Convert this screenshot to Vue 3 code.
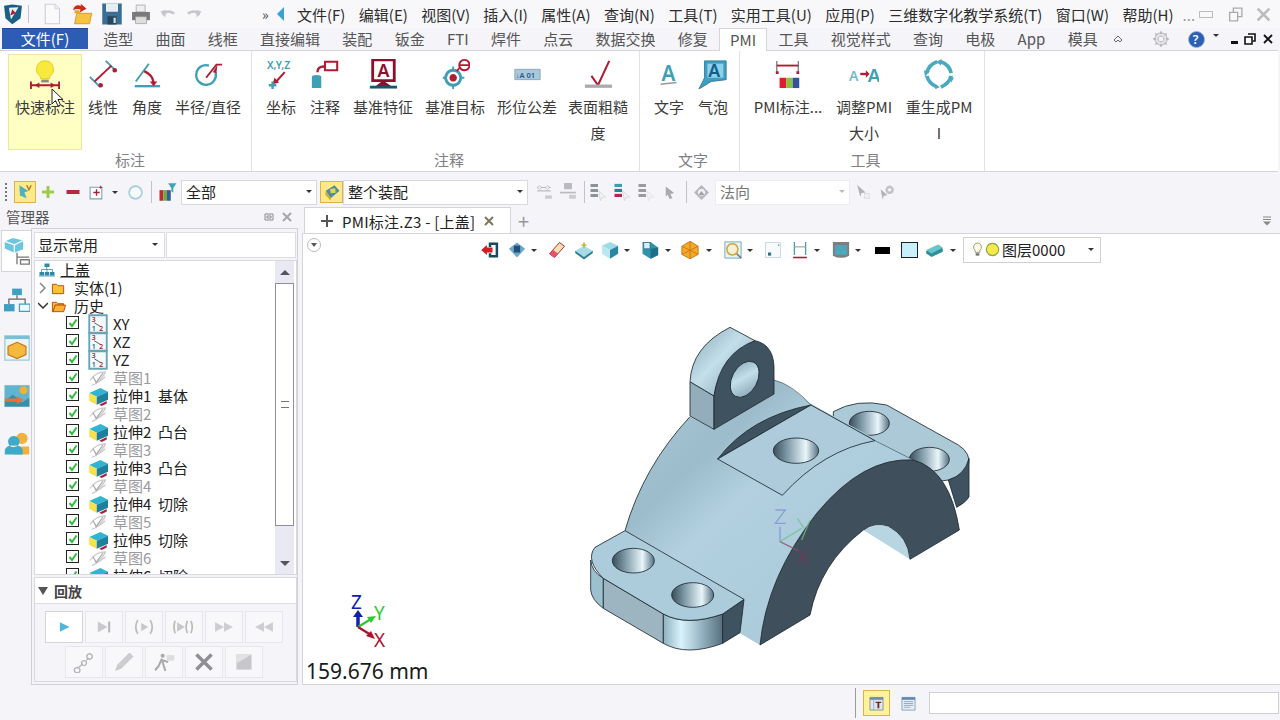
<script setup>
import { h } from 'vue'

const p = (d, f = 'none', s = 'none', w = 2) => ({ d, f, s, w })
const t = (txt, x, y, size, f) => ({ txt, x, y, size, f })
const teal = '#3f9fb5'
const red = '#b01c34'
const grey = '#b9b9bf'

const icons = {
  quick: [p('M16 2a9 9 0 0 0-5 16.500V21h10v-2.500A9 9 0 0 0 16 2z', '#f9e93c', '#e3c92a', 1), p('M12 22h8v3h-8z', '#8d8d80'), p('M1 28H31M1 24v8M31 24v8', 'none', red, 2), p('M5 28l5-3v6zM27 28l-5-3v6z', red)],
  linear: [p('M2 19L13 30M19 2L30 13', 'none', teal, 2), p('M7 24L25 7', 'none', red, 2), p('M11 28a2.500 2.500 0 1 0 5 0a2.500 2.500 0 1 0-5 0zM26 12a2.500 2.500 0 1 0 5 0a2.500 2.500 0 1 0-5 0z', red)],
  angle: [p('M3 29H30', 'none', teal, 2.500), p('M4 24L18 5', 'none', teal, 2), p('M13 13Q22 17 23 25', 'none', red, 2.500), p('M19 24h8l-4 5z', red)],
  radius: [p('M24 14A10.500 10.500 0 1 1 17 7', 'none', teal, 2.500), p('M14 20L25 6H31', 'none', red, 2), p('M21 14l5-8-1 9z', red)],
  coord: [t('X,Y,Z', 1, 11, 11, teal), p('M20 14L10 25', 'none', red, 2.200), p('M7 27l2-7 5 5z', red), p('M3 28H11M7 24V32', 'none', teal, 2.500)],
  note: [p('M2 19a5 2 0 0 1 10 0V31H2z', teal), p('M8 14Q8 8 15 8', 'none', red, 2.500), p('M16 3H29V12H16z', '#fff', red, 2.200)],
  datum: [p('M5 1H28V23H5z', '#fff', '#8c0f2e', 3), t('A', 10, 19, 19, '#8c0f2e'), p('M16 23L8 29H25z', '#8c0f2e'), p('M2 30H31', 'none', '#14566e', 3)],
  target: [p('M14 12a8 8 0 1 0 .100 0z', 'none', teal, 3), p('M14 8v4M14 28v4M3 20h4M22 20h4', 'none', teal, 2), p('M14 16a4 4 0 1 0 .100 0z', red), p('M18 13L22 8', 'none', red, 2), p('M26 1a5.500 5.500 0 1 0 .100 0zM21 6.500h11', '#fff', red, 2)],
  tol: [p('M3 11H30V22H3z', '#a9c8dc', '#8aa7bc', 1), t('↓A 01', 4, 20, 8, '#2d5a82')],
  rough: [p('M9 18L16 28L28 2', 'none', red, 2.200), p('M2 29H31', 'none', '#aaa', 3.500)],
  text: [t('A', 8, 23, 22, teal), p('M7 27L24 25', 'none', '#999', 1.500)],
  bubble: [p('M7 2H30V22L14 24L1 32L7 20z', '#3f9fc2', '#337c9a', 1), p('M10 5H27V20H10z', '#8fd0ea'), t('A', 11, 19, 19, '#0f5f8c')],
  pmi: [p('M4 2V14M27 2V14', 'none', '#7d8a90', 1.500), p('M4 7H27', 'none', red, 2), p('M3 13h3v3H3zM25 13h3v3h-3z', red), p('M7 20h7v11H7z', '#df1f2d'), p('M14 20h7v11h-7z', '#8bbf3f'), p('M21 20h7v11h-7z', '#34529a')],
  resize: [t('A', 0, 23, 15, '#7ab8c8'), p('M12 16H20', 'none', red, 2.500), p('M18 12l4 4-4 4z', red), t('A', 20, 24, 20, teal)],
  regen: [p('M14 3Q5 6 3 15', 'none', '#4aa8c0', 4), p('M18 3Q27 6 29 15', 'none', '#4aa8c0', 4), p('M3 18Q5 26 14 30', 'none', '#4aa8c0', 4), p('M29 18Q27 26 18 30', 'none', '#4aa8c0', 4), p('M0 12l6 1-5 6zM19 0l-6 3 5 4zM11 26l6 4-5 2zM32 20l-6-1 3 6z', '#4aa8c0')],

  logo: [p('M3 4L15 2L29 4L27 22L15 31L5 22z', '#1a5f83'), p('M10 7L24 6L13 24z', '#e9f1f5'), p('M15 9L20 15L12 18z', red)],
  newdoc: [p('M7 3H20L26 9V29H7z', '#fafafa', '#cfcfd4', 1.500), p('M20 3V9H26', '#eee', '#cfcfd4', 1)],
  open: [p('M9 15H29L26 29H6z', '#f5c33d', '#c98a1c', 1), p('M6 15H14L12 11H6z', '#eda42c'), p('M4 11Q6 2 15 5L14 2L22 9L13 14L14 10Q9 8 4 11z', '#cf2a16')],
  save: [p('M3 2H29V30H3z', '#3a6e94'), p('M8 2H24V13H8z', '#e6eef3'), p('M10 19H22V30H10z', '#26465e'), p('M18 21h3v7h-3z', '#cfdbe3')],
  print: [p('M9 3H22V13H9z', '#eee', '#999', 1), p('M3 13H29V25H3z', '#7a7a7e'), p('M8 20H24V30H8z', '#ddd', '#999', 1)],
  undo: [p('M8 18Q12 8 26 15', 'none', '#c6c6cb', 4), p('M4 12L12 9V22z', '#c6c6cb')],
  redo: [p('M24 18Q20 8 6 15', 'none', '#c6c6cb', 4), p('M28 12L20 9V22z', '#c6c6cb')],
  gear: [p('M16 5a11 11 0 1 0 .100 0zM16 11a5 5 0 1 1-.100 0z', '#e3e3e6', '#b0b0b6', 1.500), p('M16 2v5M16 25v5M2 16h5M25 16h5M6 6l3.500 3.500M22.500 22.500L26 26M6 26l3.500-3.500M22.500 9.500L26 6', 'none', '#b0b0b6', 2.500)],
  help: [p('M16 1a15 15 0 1 0 .100 0z', '#2d5fb4', '#a3b8da', 1.500), t('?', 9, 24, 23, '#fff')],
  restore: [p('M12 4H28V20H12z', 'none', '#aaa', 2.500), p('M5 12H20V28H5z', '#f8f8fb', '#aaa', 2.500)],
  wclose: [p('M5 5L27 27M27 5L5 27', 'none', '#bbb', 5)],

  pick: [p('M6 4L22 14L15 17L19 27L7 22z', '#4db1c4'), p('M19 4l4 8 4-8', 'none', '#a8791d', 2.500)],
  plus: [p('M13 4H19V13H28V19H19V28H13V19H4V13H13z', '#9ccb4a')],
  minus: [p('M3 12H29V20H3z', '#b8283f')],
  box: [p('M4 6H26V28H4z', '#fff', '#74a5ad', 2), p('M16 10V22M10 16H22', 'none', red, 2.500), p('M24 2l1 3 3 1-3 1-1 3-1-3-3-1 3-1z', red)],
  ring: [p('M16 4a12 12 0 1 0 .100 0z', '#f5fafa', '#a7cdd6', 3)],
  filter: [p('M4 13H10V30H4z', '#c12b2f'), p('M10 13H16V30H10z', '#6da93e'), p('M16 13H22V30H16z', '#345c9c'), p('M18 2H31L26 10V17L23 15V10z', '#3fa3b8')],
  assy: [p('M6 14L20 5L28 14L14 26z', '#4f8f9d'), p('M6 14L14 26L14 30L5 20z', '#d1aa2e'), p('M13 11L21 10L22 17L14 18z', '#e7d34f')],
  link: [p('M4 8H28M4 14H28', 'none', grey, 2), p('M8 5a3 3 0 1 0 .100 0zM22 5a3 3 0 1 0 .100 0z', '#f4f4f8', grey, 1.500), p('M18 22H30V28H18z', '#ccc')],
  dish: [p('M9 3a7 7 0 0 1 14 0V11H9z', grey), p('M2 17H30', 'none', grey, 3), p('M18 21H30V28H18z', '#ccc')],
  stackA: [p('M4 3H16V8H4zM4 11H16V16H4zM4 19H16V24H4z', '#8a9399'), p('M17 14L28 24L22 25L20 30z', '#f3f3f6', '#ccc', 1)],
  stackB: [p('M4 3H16V8H4z', '#3d9cae'), p('M4 11H16V16H4z', '#2f7f90'), p('M4 19H16V24H4z', '#b4264d'), p('M17 14L28 24L22 25L20 30z', '#f3f3f6', '#ccc', 1)],
  stackC: [p('M4 3H16V8H4zM4 11H16V16H4zM4 19H16V24H4z', '#9a9a9f'), p('M17 14L28 24L22 25L20 30z', '#f3f3f6', '#ddd', 1)],
  arrow: [p('M8 3L26 17L18 19L22 28L16 30L12 20L8 25z', '#a9a9ae')],
  normal: [p('M16 2L30 16L16 30L2 16z', '#b6b6bb'), p('M16 9a7 7 0 1 0 .100 0z', '#f1f1f5'), p('M16 13L22 21H10z', '#a0a0a5')],
  cur1: [p('M4 2L20 16L12 17L10 24z', '#b0b0b5'), p('M18 18h9v9h-9z', '#f1f1f5', '#ccc', 1)],
  cur2: [p('M3 10L16 21L9 22L7 29z', '#b0b0b5'), p('M20 3a8 8 0 1 0 .100 0zM20 8a3 3 0 1 1-.100 0z', '#c4c4c8')],

  exit: [p('M14 4H29V28H14V21H18V24H25V8H18V11H14z', '#174a5e'), p('M2 16L11 8V12H20V20H11V24z', '#d01c22')],
  view: [p('M3 14L16 4L29 14L16 28z', '#6ea8c8'), p('M11 9H21V20H11z', '#1f4f7a')],
  eraser: [p('M4 22L20 4L28 10L12 28z', '#f2e3b0', red, 1.500), p('M4 22L10 16L18 22L12 28z', '#e3566a')],
  planeTop: [p('M2 17L16 9L30 17L16 27z', '#a8dbe3'), p('M2 17L16 27V31L2 21zM30 17L16 27V31L30 21z', '#2f8196'), p('M16 3V12M12 8H20', 'none', '#c8a324', 2)],
  cube: [p('M3 9L16 3L29 9L16 16z', '#9edae8'), p('M3 9L16 16V30L3 22z', '#b9e8f0'), p('M29 9L16 16V30L29 22z', '#2a87a2')],
  cubeV: [p('M4 3H17L29 12V24L17 30L4 22z', '#2f93ad'), p('M6 4H16V14H6z', '#d9eff5', '#1f5b74', 1), p('M17 14L29 12V24L17 30z', '#1d6f8a')],
  wire: [p('M16 2L29 10V23L16 30L3 23V10z', '#f4a927', '#c9791a', 1.500), p('M3 10L29 23M29 10L3 23M16 2V30', 'none', '#c9791a', 1.500)],
  zoom: [p('M3 3H29V29H3z', '#e9f3f6', '#74a9b8', 1.500), p('M15 6a9 9 0 1 0 .100 0z', '#f8efd0', '#c8a94a', 2.500), p('M22 22L29 29', 'none', '#777', 2.500)],
  paper: [p('M4 4H28V28H4z', '#f7fbfc', '#b4c6cc', 1), p('M8 20h5v5H8z', '#2f6f80'), p('M24 7h2v2h-2z', '#2f8196')],
  dim: [p('M7 3V24M25 3V24', 'none', teal, 2), p('M7 11H25', 'none', '#888', 1.500), p('M5 28H27', 'none', red, 2.500)],
  monitor: [p('M3 3H29V25Q16 32 3 25z', '#7e7e82'), p('M6 8H26V24H6z', '#5d9db2'), p('M13 11l3-2 3 2v3h-6zM8 18l3-2 3 2v3H8zM18 18l3-2 3 2v3h-6z', '#2fb9cf')],
  layers: [p('M2 17L22 8L30 13V18L11 27L2 21z', '#2f8f9c'), p('M2 15L22 6L30 11L11 21z', '#6ac4c8')],
  bulb: [p('M16 2a9 9 0 0 0-5 16V22h10V18A9 9 0 0 0 16 2z', '#fdfdea', '#9b9b63', 2), p('M12 24h8v5h-8z', '#6f6f6f')],
  dot: [p('M16 3a13 13 0 1 0 .100 0z', '#f8e94a', '#88a64a', 2.500)],

  tree: [p('M11 3H21V10H11z', '#2f88a8'), p('M15.500 10V15M5 20V15H27V20M16 15V20', 'none', '#2f88a8', 1.500), p('M1 20H10V27H1zM11.500 20H20.500V27H11.500zM22 20H31V27H22z', '#2f88a8'), p('M0 28H32', 'none', '#2f88a8', 1.500)],
  folder: [p('M3 7H12L15 10H27V27H3z', '#f7c32e', '#b9481c', 2)],
  folderOpen: [p('M3 7H12L15 10H27V13H9L5 27H3z', '#f7c32e', '#b9481c', 2), p('M9 13H31L27 27H4z', '#f7b52e', '#b9481c', 2)],
  plane: [p('M2 2H30V30H2z', '#f4fafc', '#69a3b6', 3), t('3', 6, 13, 11, red), t('1', 6, 27, 11, '#1e5f88'), t('2', 18, 27, 11, red), p('M10 14L20 20', 'none', '#555', 1.500)],
  sketch: [p('M3 20Q12 6 28 6Q24 16 12 24', 'none', '#c9c9cd', 2), p('M6 28Q16 24 28 14', 'none', '#c9c9cd', 2), p('M8 14L13 23L24 8', 'none', '#aaa', 2)],
  extrude: [p('M2 11L20 3L32 9L14 17z', '#2fb5d3'), p('M2 11L14 17V30L2 24z', '#f9e04c'), p('M14 17L32 9V22L14 30z', '#1f7f9c'), p('M18 30L30 24V28L22 32z', '#a8213a')],

  sideModel: [p('M11 1L23 4V14L13 18L2 13V5z', '#6ec5e0'), p('M2 5L13 9L23 4M13 9V18', 'none', '#fff', 1.500), p('M16 23H30M16 18V31M20 26H30V31H20z', 'none', '#777', 1.500)],
  sideAssy: [p('M10 2H22V10H10z', '#3f9fc2'), p('M16 10V15M6 21V15H26V21', 'none', '#666', 1.500), p('M0 21H13V30H0z', '#3f9fc2'), p('M19 21H32V30H19z', '#f0f7fa', '#3f9fc2', 1.500)],
  sideView: [p('M1 1H31V31H1z', '#eaf5f8', '#9fc9d6', 1.500), p('M1 1H31V5H1z', '#7ac0d4'), p('M16 9L27 14V24L16 29L5 24V14z', '#f6b93b', '#c9791a', 1.500)],
  sideImage: [p('M1 3H31V29H1z', '#5fb4cf', '#8bb8c8', 1), p('M24 4a5 5 0 1 0 .100 0z', '#f2b134'), p('M1 22L11 14L22 24L31 18V29H1z', '#3a8ea8'), p('M1 19H16V16L24 21L16 26V23H1z', '#e4733a')],
  sideUser: [p('M22 2a7 7 0 1 0 .100 0zM12 19H31V29H12z', '#f2b13c'), p('M12 6a7 7 0 1 0 .100 0zM1 23Q4 17 12 18Q20 17 23 23V29H1z', '#3caac8')],

  play: [p('M10 9L24 16L10 23z', '#4fb6d8')],
  next: [p('M7 8L21 16L7 24z', '#c9c9ce'), p('M22 8H25V24H22z', '#b5b5ba')],
  replay: [p('M12 10L22 16L12 22z', '#c6c6cb'), p('M7 6Q1 16 7 26M25 6Q31 16 25 26', 'none', '#bbb', 2.500)],
  replay2: [p('M6 9L17 16L6 23z', '#c6c6cb'), p('M3 7Q0 16 3 25M21 7Q17 16 21 25M26 7Q30 16 26 25', 'none', '#bbb', 2.500)],
  fwd: [p('M3 9L16 16L3 23zM16 9L29 16L16 23z', '#cdcdd2')],
  back: [p('M16 9L3 16L16 23zM29 9L16 16L29 23z', '#cdcdd2')],
  chain: [p('M6 24a4 4 0 1 0 .100 0zM24 4a4 4 0 1 0 .100 0zM16 14a3.500 3.500 0 1 0 .100 0z', 'none', '#b4b4b8', 2), p('M8 24L14 19M19 14L23 10', 'none', '#b4b4b8', 2)],
  pencil: [p('M4 28L7 20L24 3L29 8L12 25z', '#cdcdd1', '#bdbdc1', 1)],
  runner: [p('M14 4a3 3 0 1 0 .100 0z', '#aaa'), p('M13 11L8 22L3 28M13 13L18 29M13 13L22 16', 'none', '#aaa', 3), p('M20 6H31V14H20z', '#ddd')],
  cross: [p('M5 5L27 27M27 5L5 27', 'none', '#8e8e93', 5)],
  square: [p('M5 5H27V27H5z', '#c7c7cb'), p('M5 5H27L5 18z', '#e2e2e5')],

  statusA: [p('M2 3H30V30H2z', '#dfe6ee', '#6a7d92', 1.500), p('M2 3H30V8H2z', '#6f89a8'), p('M10 8V30', 'none', '#6a7d92', 1), p('M14 12H26V15H22V26H18V15H14z', '#6e2a2a')],
  statusB: [p('M2 3H30V30H2z', '#e8eef6', '#6a88ad', 1.500), p('M2 3H30V8H2z', '#5d83b0'), p('M6 12H26M6 16H26M6 20H26M6 24H20', 'none', '#7790ad', 1.500)],
}

// functional icon: every icon is drawn on the same 32 grid
const Ico = (props) => h('svg', { width: props.size || 20, height: props.size || 20, viewBox: '0 0 32 32', class: 'ico' },
  (icons[props.name] || []).map(s => s.txt
    ? h('text', { x: s.x, y: s.y, 'font-size': s.size, fill: s.f, 'font-family': 'Noto Sans, sans-serif', 'font-weight': 600 }, s.txt)
    : h('path', { d: s.d, fill: s.f, stroke: s.s, 'stroke-width': s.w })))
Ico.props = ['name', 'size']

const menus = ['文件(F)', '编辑(E)', '视图(V)', '插入(I)', '属性(A)', '查询(N)', '工具(T)', '实用工具(U)', '应用(P)', '三维数字化教学系统(T)', '窗口(W)', '帮助(H)']
const tabs = ['造型', '曲面', '线框', '直接编辑', '装配', '钣金', 'FTI', '焊件', '点云', '数据交换', '修复', 'PMI', '工具', '视觉样式', '查询', '电极', 'App', '模具']

const groups = [
  { label: '标注', w: 243, pad: 0, items: [
    { icon: 'quick', lines: ['快速标注'], hot: true, w: 72 },
    { icon: 'linear', lines: ['线性'], w: 44 },
    { icon: 'angle', lines: ['角度'], w: 44 },
    { icon: 'radius', lines: ['半径/直径'], w: 78 },
  ] },
  { label: '注释', w: 388, pad: 7, items: [
    { icon: 'coord', lines: ['坐标'], w: 44 },
    { icon: 'note', lines: ['注释'], w: 44 },
    { icon: 'datum', lines: ['基准特征'], w: 72 },
    { icon: 'target', lines: ['基准目标'], w: 72 },
    { icon: 'tol', lines: ['形位公差'], w: 72 },
    { icon: 'rough', lines: ['表面粗糙', '度'], w: 70 },
  ] },
  { label: '文字', w: 100, pad: 7, items: [
    { icon: 'text', lines: ['文字'], w: 44 },
    { icon: 'bubble', lines: ['气泡'], w: 44 },
  ] },
  { label: '工具', w: 245, pad: 7, items: [
    { icon: 'pmi', lines: ['PMI标注...'], w: 82 },
    { icon: 'resize', lines: ['调整PMI', '大小'], w: 70 },
    { icon: 'regen', lines: ['重生成PM', 'I'], w: 80 },
  ] },
]

const sketch = n => ({ icon: 'sketch', label: '草图' + n, dim: true })
const ext = (n, kind) => ({ icon: 'extrude', label: '拉伸' + n + '\u00a0\u00a0' + kind })
const history = [
  { icon: 'plane', label: 'XY' }, { icon: 'plane', label: 'XZ' }, { icon: 'plane', label: 'YZ' },
  sketch(1), ext(1, '基体'), sketch(2), ext(2, '凸台'), sketch(3), ext(3, '凸台'),
  sketch(4), ext(4, '切除'), sketch(5), ext(5, '切除'), sketch(6), ext(6, '切除'),
]

const viewTools = [
  { icon: 'exit', w: 27 }, { icon: 'view', w: 19 }, { drop: true, w: 21 }, { icon: 'eraser', w: 27 },
  { icon: 'planeTop', w: 26 }, { icon: 'cube', w: 19 }, { drop: true, w: 21 }, { icon: 'cubeV', w: 20 },
  { drop: true, w: 20 }, { icon: 'wire', w: 21 }, { drop: true, w: 22 }, { icon: 'zoom', w: 19 },
  { drop: true, w: 21 }, { icon: 'paper', w: 27 }, { icon: 'dim', w: 19 }, { drop: true, w: 22 },
  { icon: 'monitor', w: 19 }, { drop: true, w: 22 },
]
const playRow1 = ['play', 'next', 'replay', 'replay2', 'fwd', 'back']
const playRow2 = ['chain', 'pencil', 'runner', 'cross', 'square']
</script>

<template>
  <div class="app">
    <div class="titlebar">
      <Ico class="logo" name="logo" :size="22" />
      <span class="vsep"></span>
      <div class="quick">
        <Ico name="newdoc" :size="24" />
        <Ico name="open" :size="24" />
        <Ico name="save" :size="24" />
        <Ico name="print" :size="22" />
        <Ico name="undo" :size="20" />
        <Ico name="redo" :size="20" />
      </div>
      <span class="more">»</span>
      <span class="back-tri"></span>
      <nav class="menus">
        <span v-for="m in menus" :key="m">{{ m }}</span>
      </nav>
      <span class="dots">...</span>
      <div class="winbtns">
        <span class="win-min"></span>
        <Ico name="restore" :size="17" />
        <Ico name="wclose" :size="17" />
      </div>
    </div>

    <div class="tabrow">
      <div class="filebtn">文件(F)</div>
      <div class="tabs">
        <span v-for="tab in tabs" :key="tab" class="tab" :class="{ active: tab === 'PMI' }">{{ tab }}</span>
      </div>
      <div class="tabright">
        <svg class="chev" width="12" height="10" viewBox="0 0 12 10"><path d="M2 6l4-4 4 4-2 2-2-2-2 2z" fill="none" stroke="#666" stroke-width="1"/></svg>
        <Ico class="gear" name="gear" :size="18" />
        <Ico class="help" name="help" :size="17" />
        <span class="mini-drop"></span>
        <span class="mdi-min"></span>
        <svg class="mdi-res" width="12" height="12" viewBox="0 0 12 12"><path d="M4 1h7v7H9M1 4h7v7H1z" fill="#fff" stroke="#111" stroke-width="1.600"/></svg>
        <svg class="mdi-x" width="12" height="12" viewBox="0 0 12 12"><path d="M2 2l8 8M10 2l-8 8" stroke="#111" stroke-width="1.800"/></svg>
      </div>
    </div>

    <div class="ribbon">
      <section v-for="g in groups" :key="g.label" class="group" :style="{ width: g.w + 'px', paddingLeft: g.pad + 'px' }">
        <div class="items">
          <div v-for="it in g.items" :key="it.icon" class="item" :class="{ hot: it.hot }" :style="{ width: it.w + 'px' }">
            <div class="item-icon"><Ico :name="it.icon" :size="30" /></div>
            <div v-for="l in it.lines" :key="l" class="item-line">{{ l }}</div>
            <svg v-if="it.hot" class="cursor" width="13" height="20" viewBox="0 0 13 20"><path d="M1 1V16L4.500 12.500L7 18L9.500 17L7 11.500H12z" fill="#fff" stroke="#222" stroke-width="1"/></svg>
          </div>
        </div>
        <div class="group-label">{{ g.label }}</div>
      </section>
    </div>

    <div class="seltool">
      <span class="grip"></span>
      <span class="yellow-btn first"><Ico name="pick" :size="18" /></span>
      <Ico class="m-plus" name="plus" :size="16" />
      <Ico class="m-minus" name="minus" :size="16" />
      <Ico class="m-box" name="box" :size="17" />
      <span class="drop d-box"></span>
      <Ico class="m-ring" name="ring" :size="17" />
      <span class="vsep tall s-a"></span>
      <Ico class="m-filter" name="filter" :size="20" />
      <div class="combo c-all"><span>全部</span><i class="drop"></i></div>
      <span class="yellow-btn second"><Ico name="assy" :size="20" /></span>
      <div class="combo c-assy"><span>整个装配</span><i class="drop"></i></div>
      <Ico class="m-link" name="link" :size="18" />
      <Ico class="m-dish" name="dish" :size="18" />
      <span class="vsep tall s-b"></span>
      <Ico class="m-st" name="stackA" :size="20" />
      <Ico class="m-st2" name="stackB" :size="20" />
      <Ico class="m-st2" name="stackC" :size="20" />
      <Ico class="m-arrow" name="arrow" :size="15" />
      <span class="vsep tall s-c"></span>
      <Ico class="m-normal" name="normal" :size="17" />
      <div class="combo c-normal"><span>法向</span><i class="drop pale"></i></div>
      <Ico class="m-cur" name="cur1" :size="17" />
      <Ico class="m-cur2" name="cur2" :size="17" />
    </div>

    <div class="main">
      <aside class="left">
        <div class="panel-head">
          <span>管理器</span>
          <svg class="ph-a" width="10" height="10" viewBox="0 0 10 10"><path d="M1 2h8v6H1zM3 4h4v2H3z" fill="none" stroke="#8a8a90" stroke-width="1"/></svg>
          <svg class="ph-b" width="12" height="10" viewBox="0 0 12 10"><path d="M2 1l8 8M10 1l-8 8" stroke="#a5a5aa" stroke-width="2"/></svg>
        </div>
        <div class="panel-body">
          <div class="strip">
            <div class="strip-tab on"><Ico name="sideModel" :size="28" /></div>
            <div class="strip-tab"><Ico name="sideAssy" :size="26" /></div>
            <div class="strip-tab"><Ico name="sideView" :size="26" /></div>
            <div class="strip-tab"><Ico name="sideImage" :size="26" /></div>
            <div class="strip-tab"><Ico name="sideUser" :size="26" /></div>
          </div>
          <div class="panel">
            <div class="filter-row">
              <div class="combo c-show"><span>显示常用</span><i class="drop"></i></div>
              <div class="search"></div>
            </div>
            <div class="tree-wrap">
              <div class="tree">
                <div class="row root"><Ico name="tree" :size="16" /><span class="u">上盖</span></div>
                <div class="row fold">
                  <svg width="10" height="12" viewBox="0 0 10 12"><path d="M2 1l5 5-5 5" fill="none" stroke="#888" stroke-width="1.500"/></svg>
                  <Ico name="folder" :size="15" /><span class="fold-label">实体(1)</span>
                </div>
                <div class="row fold">
                  <svg width="10" height="12" viewBox="0 0 10 12"><path d="M0 3l5 5 5-5" fill="none" stroke="#333" stroke-width="1.500"/></svg>
                  <Ico name="folderOpen" :size="15" /><span class="fold-label">历史</span>
                </div>
                <div v-for="n in history" :key="n.label" class="row leaf" :class="{ dim: n.dim }">
                  <span class="check"><svg width="10" height="10" viewBox="0 0 10 10"><path d="M1.500 5l2.500 3 4.500-6.500" fill="none" stroke="#2fbf3f" stroke-width="2"/></svg></span>
                  <Ico :name="n.icon" :size="20" />
                  <span class="leaf-label">{{ n.label }}</span>
                </div>
              </div>
              <div class="scrollbar">
                <div class="sb-btn"><i class="up"></i></div>
                <div class="sb-thumb"><span></span></div>
                <div class="sb-track"></div>
                <div class="sb-btn low"><i class="down"></i></div>
              </div>
            </div>
            <div class="playback">
              <div class="pb-head"><i class="pb-tri"></i>回放</div>
              <div class="pb-rows">
                <div class="pb-row">
                  <span v-for="(b, i) in playRow1" :key="b" class="pb-btn" :class="{ white: i === 0 }"><Ico :name="b" :size="22" /></span>
                </div>
                <div class="pb-row two">
                  <span v-for="b in playRow2" :key="b" class="pb-btn"><Ico :name="b" :size="22" /></span>
                </div>
              </div>
            </div>
          </div>
        </div>
      </aside>

      <section class="work">
        <div class="doc-tabs">
          <div class="doc-tab">
            <svg width="14" height="14" viewBox="0 0 14 14"><path d="M7 1v12M1 7h12" stroke="#555" stroke-width="2"/></svg>
            <span>PMI标注.Z3 - [上盖]</span>
            <svg width="12" height="12" viewBox="0 0 12 12"><path d="M2 2l8 8M10 2l-8 8" stroke="#7f765c" stroke-width="2"/></svg>
          </div>
          <span class="doc-plus">+</span>
          <svg class="doc-menu" width="12" height="10" viewBox="0 0 12 10"><path d="M2 1h8M2 3.500h8" stroke="#888" stroke-width="1"/><path d="M2 5.500h8L6 9.500z" fill="#888"/></svg>
        </div>
        <div class="canvas">
          <div class="view-bar">
            <span class="collapse"><i></i></span>
            <div class="view-tools">
              <span v-for="(v, i) in viewTools" :key="i" class="vt" :style="{ width: v.w + 'px' }">
                <Ico v-if="v.icon" :name="v.icon" :size="20" />
                <i v-else class="drop"></i>
              </span>
              <span class="blackrect"></span>
              <span class="cyanrect"></span>
              <span class="vt layers"><Ico name="layers" :size="19" /></span>
              <i class="drop layers-drop"></i>
              <div class="layer-combo">
                <Ico name="bulb" :size="15" />
                <Ico name="dot" :size="15" />
                <span>图层0000</span>
                <i class="drop"></i>
              </div>
            </div>
          </div>

          <!-- the part itself, coordinates are 3x screen pixels -->
          <svg class="model" width="420" height="350" viewBox="0 0 1260 1050">
            <defs>
              <linearGradient id="hole" x1="0" x2="1" y1="0" y2="0">
                <stop offset="0" stop-color="#3a4d59"/><stop offset=".3" stop-color="#7d98a6"/><stop offset=".72" stop-color="#e8f6fb"/><stop offset="1" stop-color="#54707f"/>
              </linearGradient>
              <linearGradient id="round" x1="0" x2="1" y1="0" y2="0">
                <stop offset="0" stop-color="#8fb0c0"/><stop offset=".3" stop-color="#d9f3fb"/><stop offset=".7" stop-color="#8aa9b8"/><stop offset="1" stop-color="#566f7d"/>
              </linearGradient>
              <linearGradient id="skin" x1="0" y1="0" x2="1" y2="1">
                <stop offset="0" stop-color="#a9c8d8"/><stop offset=".28" stop-color="#9dbccb"/><stop offset=".42" stop-color="#b2d0df"/><stop offset="1" stop-color="#a6c6d7"/>
              </linearGradient>
              <linearGradient id="lugtop" x1="0" y1="0" x2="1" y2="1">
                <stop offset="0" stop-color="#86a4b4"/><stop offset=".45" stop-color="#c3dfea"/><stop offset="1" stop-color="#7f9cac"/>
              </linearGradient>
            </defs>
            <g stroke="#1c2830" stroke-width="2.500" stroke-linejoin="round">
              <!-- rear flange, its inner edge runs under the body -->
              <path d="M790 305Q860 265 950 285L1165 405Q1205 430 1195 470Q1185 495 1135 510L1060 520L790 420z" fill="#acc9d8"/>
              <path d="M1135 510Q1185 495 1197 445V560Q1190 575 1160 592z" fill="#3f525f"/>
              <ellipse cx="898" cy="340" rx="60" ry="36" fill="url(#hole)"/>
              <ellipse cx="1078" cy="448" rx="60" ry="36" fill="url(#hole)"/>

              <!-- body skin follows the outer arc of the end face, the bore stays open -->
              <path d="M165 662Q220 470 360 320L432 358L612 252L610 210Q650 215 720 280L1030 450Q880 440 740 610Q590 800 570 1005L510 970L520 868z" fill="url(#skin)" stroke="none"/>
              <path d="M165 662Q220 470 360 320" fill="none"/>
              <path d="M612 210Q670 225 722 285L915 392L1030 450" fill="none" stroke-width="1.500"/>

              <!-- left flange -->
              <path d="M62 750V840Q65 870 100 895L100 805Q65 785 62 750z" fill="#9dc0cf"/>
              <path d="M100 805L280 912V1000L100 895z" fill="#9cb5c1"/>
              <path d="M280 912Q350 950 458 912V1000Q350 1040 280 1000z" fill="url(#round)"/>
              <path d="M458 912L522 868L510 968L458 1000z" fill="#3e5260"/>
              <path d="M165 662L75 712Q45 750 100 805L280 912Q350 950 458 912L522 868z" fill="#acccdc"/>
              <ellipse cx="190" cy="752" rx="63" ry="37" fill="url(#hole)"/>
              <ellipse cx="368" cy="855" rx="63" ry="37" fill="url(#hole)"/>

              <!-- end face and bore -->
              <path d="M880 660Q960 620 1005 690Q1018 715 1020 748z" fill="#b8d5e2" stroke="none"/>
              <path d="M570 1005Q590 800 740 610Q880 440 1030 450Q1140 480 1168 660L1020 748Q1015 680 955 648Q915 635 880 660Q750 760 720 915z" fill="#3f505c"/>

              <!-- machined pad -->
              <path d="M443 447Q540 320 723 285z" fill="#3f525f"/>
              <path d="M443 447L723 285L915 392Q760 420 637 556z" fill="#adcbdb"/>
              <ellipse cx="678" cy="422" rx="68" ry="38" fill="url(#hole)"/>

              <!-- lug -->
              <path d="M360 215L432 258V358L360 318z" fill="#94adba"/>
              <path d="M360 215Q365 110 480 52L555 92Q450 150 432 258z" fill="url(#lugtop)"/>
              <path d="M432 258Q450 130 555 92Q615 105 612 185V252L432 358z" fill="#3f525f"/>
              <ellipse cx="524" cy="208" rx="38" ry="58" transform="rotate(28 524 208)" fill="url(#lugtop)" stroke="#1c2830"/>
            </g>
            <!-- ghost triad over the part -->
            <g fill="none" stroke-width="4" opacity=".75">
              <path d="M630 695V650" stroke="#7d8fd0"/>
              <path d="M630 695L695 655" stroke="#6fc58c"/>
              <path d="M630 695L690 725" stroke="#8a5068"/>
              <path d="M616 600H646L616 640H648" stroke="#7d8fd0"/>
              <path d="M682 625L702 655M720 630L695 690" stroke="#6fc58c"/>
              <path d="M685 720L712 760M712 720L685 760" stroke="#8a3050"/>
            </g>
          </svg>

          <svg class="triad" width="52" height="68" viewBox="0 0 52 68">
            <path d="M15 37V24" stroke="#1020a8" stroke-width="3.500"/>
            <path d="M10 27l5-7 5 7z" fill="#1020a8"/>
            <path d="M15 37L28 29" stroke="#30c838" stroke-width="2.500"/>
            <path d="M24 27l9-1-5 7z" fill="#30c838"/>
            <path d="M15 37L28 45" stroke="#b01030" stroke-width="2.500"/>
            <path d="M23 46l9 3-4-8z" fill="#b01030"/>
            <text x="8" y="19" font-size="19" fill="#1020a8" font-family="Noto Sans, sans-serif">Z</text>
            <text x="31" y="30" font-size="19" fill="#30c838" font-family="Noto Sans, sans-serif">Y</text>
            <text x="31" y="57" font-size="19" fill="#b01030" font-family="Noto Sans, sans-serif">X</text>
          </svg>
          <div class="measure">159.676 mm</div>
        </div>
      </section>
    </div>

    <footer class="statusbar">
      <span class="st-sep"></span>
      <span class="st-btn"><Ico name="statusA" :size="15" /></span>
      <Ico class="st-b" name="statusB" :size="15" />
      <div class="st-input"></div>
    </footer>
  </div>
</template>

<style>
html, body { margin: 0; background: #f4f4f9; }
</style>

<style scoped>
.app {
  width: 1280px;
  height: 720px;
  overflow: hidden;
  display: flex;
  flex-direction: column;
  background: #f4f4f9;
  color: #333;
  font-family: "Noto Sans CJK SC", "Noto Sans", sans-serif;
  font-size: 15px;
}
.ico { display: block; flex: none; }

.titlebar {
  height: 28px;
  flex: none;
  display: flex;
  align-items: center;
  background: #f8f8fb;
}
.logo { margin-left: 2px; }
.vsep { width: 1px; height: 18px; background: #c2c2c8; margin-left: 4px; flex: none; }
.quick { display: flex; align-items: center; gap: 6px; margin-left: 11px; }
.more { margin-left: 58px; font-size: 14px; color: #444; width: 12px; }
.back-tri {
  width: 0; height: 0; margin-left: 3px;
  border-top: 7px solid transparent; border-bottom: 7px solid transparent; border-right: 7px solid #3aa0d8;
}
.menus { display: flex; gap: 13.400px; margin-left: 13px; white-space: nowrap; color: #2c2c2c; }
.dots { margin-left: 9px; color: #999; }
.winbtns { display: flex; align-items: center; margin-left: auto; gap: 11px; padding-right: 8px; }
.win-min { width: 12px; height: 5px; border: 1px solid #bbb; margin-right: 3px; }

.tabrow { height: 22px; flex: none; display: flex; align-items: stretch; position: relative; z-index: 1; }
.filebtn {
  width: 86px; margin-left: 2px; height: 21px;
  background: #2c5cb4; color: #fff; text-align: center; line-height: 20px;
  border-top: 1px solid #1f4a98; box-sizing: border-box;
}
.tabs { display: flex; margin-left: 4px; color: #555; }
.tab { padding: 0 11.150px; line-height: 22px; height: 22px; white-space: nowrap; box-sizing: border-box; }
.tab.active {
  background: #fff; height: 23px; color: #555;
  border: 1px solid #d4d4da; border-bottom: none; padding: 0 10.150px;
}
.tabright { margin-left: auto; display: flex; align-items: center; padding-right: 6px; }
.chev { margin-right: 28px; }
.gear { margin-right: 18px; }
.help { margin-right: 8px; }
.mini-drop { width: 0; height: 0; border-left: 3px solid transparent; border-right: 3px solid transparent; border-top: 3px solid #333; margin-right: 12px; margin-top: -8px; }
.mdi-min { width: 7px; height: 3px; background: #111; margin-right: 6px; margin-top: 6px; }
.mdi-res { margin-right: 6px; }

.ribbon {
  height: 120px; flex: none; display: flex;
  background: #fff; border-bottom: 1px solid #d4d4da; border-top: 1px solid #d4d4da;
  padding-left: 9px; margin-right: 2px;
}
.group { display: flex; flex-direction: column; border-right: 1px solid #e1e1e6; flex: none; box-sizing: border-box; }
.items { display: flex; height: 99px; padding-top: 4px; box-sizing: border-box; }
.item { position: relative; text-align: center; flex: none; height: 94px; box-sizing: border-box; color: #3a3a3a; white-space: nowrap; }
.item.hot { background: #ffffc4; outline: 1px solid #ebe6a6; }
.item-icon { height: 38px; display: flex; justify-content: center; align-items: center; margin-bottom: 1px; }
.item-line { line-height: 26px; display: flex; justify-content: center; }
.cursor { position: absolute; left: 42px; top: 33px; }
.group-label { text-align: center; color: #808086; line-height: 20px; }

.seltool { height: 30px; margin-top: 5px; flex: none; display: flex; align-items: center; }
.grip { width: 2px; height: 18px; margin-left: 5px; background: repeating-linear-gradient(#777 0 2px, transparent 2px 4px); }
.yellow-btn {
  display: flex; align-items: center; justify-content: center; flex: none;
  background: #ffe98a; border: 1px solid #d8b44a; box-sizing: border-box; height: 22px;
}
.yellow-btn.first { width: 22px; margin-left: 7px; }
.yellow-btn.second { width: 23px; margin-left: 3px; }
.m-plus { margin-left: 4px; }
.m-minus { margin-left: 9px; }
.m-box { margin-left: 7px; }
.drop { display: inline-block; width: 0; height: 0; border-left: 3px solid transparent; border-right: 3px solid transparent; border-top: 3px solid #333; flex: none; }
.drop.pale { border-top-color: #bbb; }
.d-box { margin-left: 7px; }
.m-ring { margin-left: 9px; }
.vsep.tall { height: 22px; }
.s-a { margin-left: 7px; }
.m-filter { margin-left: 5px; }
.combo {
  display: flex; align-items: center; justify-content: space-between; flex: none;
  background: #fff; border: 1px solid #d8d8de; box-sizing: border-box; height: 25px; padding: 0 4px 2px 4px;
  color: #222;
}
.c-all { width: 136px; margin-left: 4px; }
.c-assy { width: 185px; }
.m-link { margin-left: 7px; }
.m-dish { margin-left: 6px; }
.s-b { margin-left: 7px; }
.m-st { margin-left: 3px; }
.m-st2 { margin-left: 4px; }
.m-arrow { margin-left: 6px; }
.s-c { margin-left: 9px; }
.m-normal { margin-left: 6px; }
.c-normal { width: 135px; margin-left: 5px; color: #777; border-color: #ececf0; }
.m-cur { margin-left: 5px; }
.m-cur2 { margin-left: 7px; }

.main { flex: 1; min-height: 0; display: flex; }
.left { width: 300px; flex: none; display: flex; flex-direction: column; }
.panel-head { height: 21px; flex: none; display: flex; align-items: center; padding-left: 6px; padding-bottom: 2px; box-sizing: border-box; color: #555; font-size: 14.500px; }
.ph-a { margin-left: auto; }
.ph-b { margin-left: 7px; margin-right: 7px; }
.panel-body { flex: 1; min-height: 0; display: flex; }
.strip { width: 31px; flex: none; padding-top: 2px; display: flex; flex-direction: column; align-items: center; }
.strip-tab { height: 48px; width: 100%; display: flex; align-items: center; justify-content: center; box-sizing: border-box; margin-left: 2px; flex: none; }
.strip-tab.on { height: 42px; margin-bottom: 4px; background: #fff; border: 1px solid #d4d4da; border-right: none; }
.panel {
  width: 267px; box-sizing: border-box; border: 1px solid #d0d0d6; padding: 3px 1px 2px 2px; margin-bottom: 1px;
  display: flex; flex-direction: column; gap: 2px; background: #f4f4f9;
}
.filter-row { display: flex; gap: 1px; height: 26px; flex: none; }
.c-show { width: 131px; height: 26px; padding-right: 6px; padding-left: 3px; border-color: #dcdce2; }
.search { width: 130px; background: #fff; border: 1px solid #dcdce2; box-sizing: border-box; }
.tree-wrap { height: 315px; flex: none; display: flex; background: #fff; border: 1px solid #d8d8de; box-sizing: border-box; width: 263px; }
.tree { flex: 1; overflow: hidden; min-width: 0; }
.row { height: 18px; display: flex; align-items: center; white-space: nowrap; color: #222; line-height: 18px; }
.root { padding-left: 4px; gap: 3px; }
.root .u { margin-left: 2px; border-bottom: 1px solid #888; line-height: 15px; }
.fold { padding-left: 3px; gap: 3px; }
.fold-label { margin-left: 5px; }
.leaf { padding-left: 31px; }
.leaf.dim { color: #9a9a9e; }
.check {
  width: 13px; height: 13px; box-sizing: border-box; border: 1px solid #222; background: #fff;
  display: flex; align-items: center; justify-content: center; margin-right: 9px; margin-top: -3px; flex: none;
}
.leaf-label { margin-left: 5px; }
.scrollbar { width: 19px; flex: none; margin-right: 2px; display: flex; flex-direction: column; background: #e9e9f3; }
.sb-btn { height: 22px; display: flex; align-items: center; justify-content: center; flex: none; }
.sb-btn.low { margin-top: auto; }
.sb-thumb { height: 243px; background: #fff; border: 1px solid #8f8f99; box-sizing: border-box; display: flex; align-items: center; justify-content: center; flex: none; }
.sb-thumb span { width: 8px; height: 5px; border-top: 1px solid #777; border-bottom: 1px solid #777; position: relative; }
.sb-track { flex: 1; }
.up { width: 0; height: 0; border-left: 5px solid transparent; border-right: 5px solid transparent; border-bottom: 5px solid #55555f; }
.down { width: 0; height: 0; border-left: 5px solid transparent; border-right: 5px solid transparent; border-top: 5px solid #55555f; }
.playback { flex: 1; display: flex; flex-direction: column; border: 1px solid #d8d8de; width: 263px; box-sizing: border-box; min-height: 0; }
.pb-head { height: 25px; flex: none; background: #fff; border-bottom: 1px solid #dcdce2; display: flex; align-items: center; padding-left: 3px; font-weight: 700; color: #444; font-size: 14px; }
.pb-tri { width: 0; height: 0; border-left: 5px solid transparent; border-right: 5px solid transparent; border-top: 8px solid #555; margin-right: 6px; }
.pb-rows { flex: 1; display: flex; flex-direction: column; align-items: center; gap: 3px; padding-top: 7px; padding-right: 3px; }
.pb-row { display: flex; gap: 2px; }
.pb-btn { width: 38px; height: 32px; display: flex; align-items: center; justify-content: center; border: 1px solid #e6e6ec; box-sizing: border-box; background: #f8f8fb; }
.pb-btn.white { background: #fff; border-color: #d4d4da; }

.work { flex: 1; min-width: 0; display: flex; flex-direction: column; margin-left: 2px; margin-bottom: 1px; }
.doc-tabs { height: 27px; flex: none; display: flex; align-items: flex-end; position: relative; }
.doc-tab {
  width: 207px; height: 27px; margin-left: 2px; box-sizing: border-box;
  background: #fff; border: 1px solid #d4d4da; border-bottom: none;
  display: flex; align-items: center; padding-left: 15px; gap: 8px; color: #222; font-size: 15px; letter-spacing: .25px; white-space: nowrap;
}
.doc-plus { margin-left: 7px; color: #999; font-size: 20px; line-height: 27px; }
.doc-menu { margin-left: auto; margin-right: 7px; margin-bottom: 8px; }
.canvas { flex: 1; min-height: 0; position: relative; background: #fff; border: 1px solid #d4d4da; border-right: none; box-sizing: border-box; margin-top: -1px; }
.view-bar { height: 32px; display: flex; align-items: center; }
.collapse { width: 12px; height: 12px; border: 1px solid #bbb; border-radius: 50%; margin-left: 4px; margin-top: -10px; display: flex; align-items: center; justify-content: center; flex: none; }
.collapse i { width: 0; height: 0; border-left: 3px solid transparent; border-right: 3px solid transparent; border-top: 4px solid #555; }
.view-tools { display: flex; align-items: center; margin-left: 159px; }
.vt { display: flex; align-items: center; justify-content: flex-start; height: 20px; flex: none; box-sizing: border-box; }
.vt .drop { margin-left: 5px; }
.blackrect { width: 15px; height: 7px; background: #000; margin-left: 3px; margin-right: 11px; flex: none; }
.cyanrect { width: 15px; height: 14px; background: #c8f0fa; border: 1px solid #222; margin-right: 7px; flex: none; box-sizing: content-box; }
.layers { width: 19px; }
.layers-drop { margin-left: 6px; margin-right: 7px; }
.layer-combo {
  width: 138px; height: 26px; box-sizing: border-box; border: 1px solid #cfcfd5; display: flex; align-items: center;
  padding: 0 6px 2px; color: #222;
}
.layer-combo span { margin-left: 2px; }
.layer-combo .drop { margin-left: auto; }
.model { position: absolute; left: 267px; top: 76px; }
.triad { position: absolute; left: 40px; top: 356px; }
.measure { position: absolute; left: 3px; bottom: -2px; font-family: "Noto Sans", sans-serif; font-size: 21px; line-height: 30px; color: #1a1a1a; }

.statusbar { height: 34px; flex: none; display: flex; align-items: center; }
.st-sep { width: 1px; height: 30px; background: #9a9aa0; margin-left: 855px; }
.st-btn { width: 27px; height: 26px; margin-left: 7px; background: #fff29a; border: 1px solid #d8b44a; box-sizing: border-box; display: flex; align-items: center; justify-content: center; }
.st-b { margin-left: 11px; }
.st-input { width: 350px; height: 22px; margin-left: 13px; background: #fff; border: 1px solid #cfcfd5; box-sizing: border-box; }
</style>
